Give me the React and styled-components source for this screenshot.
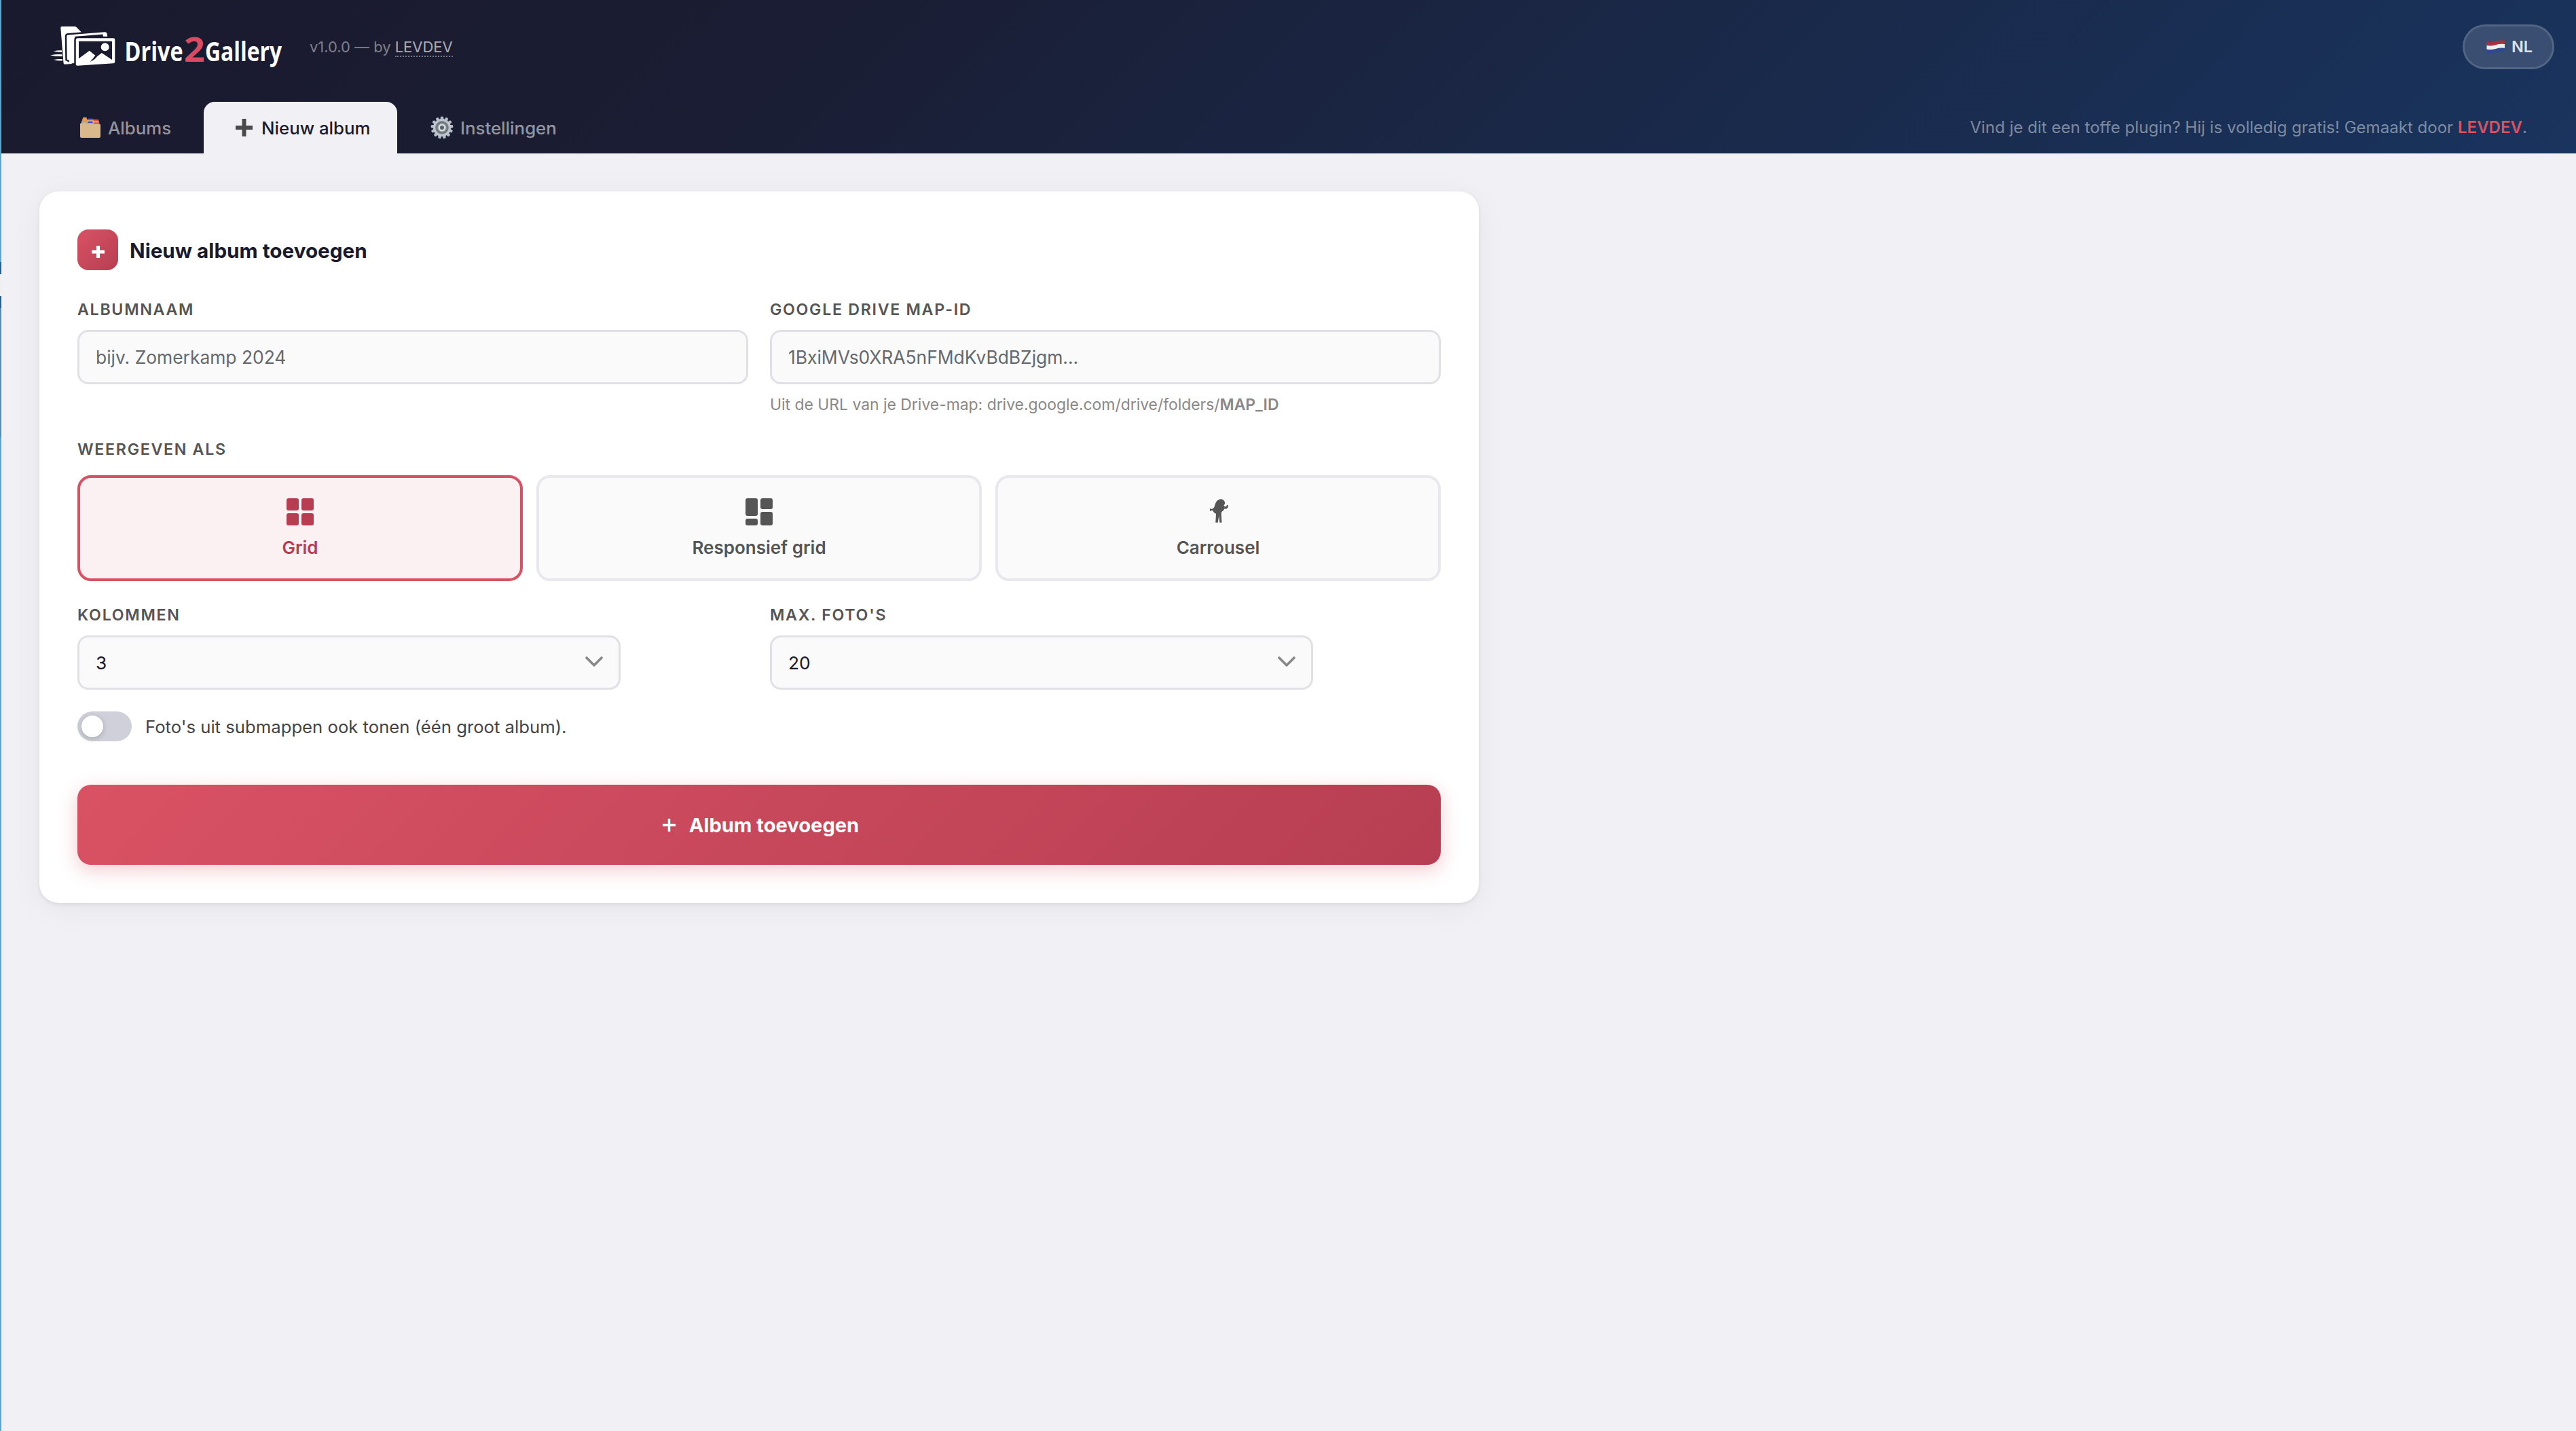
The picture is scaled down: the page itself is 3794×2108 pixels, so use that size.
import React, { useState } from 'react'
import styled, { createGlobalStyle, css } from 'styled-components';

const GlobalStyle = createGlobalStyle`
  * {
    box-sizing: border-box;
  }
  body {
    margin: 0;
    background: #f0f0f5;
    font-family: Inter, "Liberation Sans", sans-serif;
    color: #1a1a2e;
  }
`

const Page = styled.div`
  display: flex;
  min-height: 2108px;
`

// edge of the wp-admin menu, with the arrow of the current item
const MenuEdge = styled.div`
  flex: none;
  display: flex;
  flex-direction: column;
  width: 2px;
  background: #5ba4cc;
`

const MenuGap = styled.div`
  height: 386px;
`

const MenuCurrent = styled.div`
  height: 68px;
  padding: 18px 0;
  background: #25618c;
`

const MenuArrow = styled.div`
  height: 32px;
  background: #f0f0f1;
`

const MenuSub = styled.div`
  height: 190px;
  background: #5590b3;
`

const Content = styled.div`
  flex: 1;
`

const Header = styled.header`
  display: flex;
  flex-direction: column;
  justify-content: space-between;
  height: 226px;
  background: linear-gradient(135deg, #1a1a2e 0%, #1a1d33 30%, #19345e 100%);
`

const TopBar = styled.div`
  display: flex;
  align-items: center;
  height: 138px;
  padding: 0 32px 0 70px;
`

const LogoSvg = styled.svg`
  display: block;
  width: 346px;
  height: 76px;
`

const Version = styled.div`
  margin-left: 38px;
  font-size: 22px;
  line-height: 28px;
  letter-spacing: -0.03px;
  color: rgba(255, 255, 255, 0.45);
`

const VersionLink = styled.a`
  color: rgba(255, 255, 255, 0.65);
  border-bottom: 2px dotted rgba(255, 255, 255, 0.4);
`

const LangButton = styled.button`
  display: flex;
  align-items: center;
  justify-content: center;
  gap: 9px;
  width: 135px;
  height: 66px;
  margin-left: auto;
  padding: 0 0 1px 3px;
  border: 3px solid rgba(255, 255, 255, 0.25);
  border-radius: 40px;
  background: rgba(255, 255, 255, 0.14);
  background-clip: padding-box;
  font-family: inherit;
  font-size: 23.5px;
  font-weight: 600;
  color: rgba(255, 255, 255, 0.85);
`

const NavBar = styled.nav`
  display: flex;
  align-items: stretch;
  height: 76px;
  padding: 0 72px 0 70px;
`

const Tab = styled.a`
  display: flex;
  align-items: center;
  gap: ${props => props.$gap}px;
  width: ${props => props.$width}px;
  padding-left: ${props => props.$pad}px;
  border-radius: 16px 16px 0 0;
  font-size: 25.8px;
  font-weight: 500;
  color: rgba(255, 255, 255, 0.55);
  ${props => props.$active && css`
    background: #f0f0f5;
    color: #1a1a2e;
  `}
`

const Tagline = styled.div`
  margin-left: auto;
  align-self: center;
  padding-bottom: 2px;
  font-size: 24px;
  letter-spacing: 0.03px;
  color: rgba(255, 255, 255, 0.45);
`

const Accent = styled.a`
  font-weight: 600;
  color: #d95264;
`

const Card = styled.section`
  width: 2120px;
  height: 1048px;
  margin: 56px 0 0 56px;
  padding: 56px;
  border-radius: 28px;
  background: #fff;
  box-shadow: 0 2px 6px rgba(0, 0, 0, 0.08), 0 8px 48px rgba(0, 0, 0, 0.05);
`

const CardHead = styled.div`
  display: flex;
  align-items: center;
  gap: 17px;
  height: 60px;
`

const CardIcon = styled.div`
  display: flex;
  align-items: center;
  justify-content: center;
  width: 60px;
  height: 60px;
  padding-top: 5px;
  border-radius: 16px;
  background: linear-gradient(135deg, #d95264, #b73e52);
`

const CardTitle = styled.h2`
  margin: 0;
  padding-top: 2px;
  font-size: 29.7px;
  font-weight: 700;
`

const Row = styled.div`
  display: grid;
  grid-template-columns: 1fr 1fr;
  gap: 32px;
  margin-top: ${props => props.$top}px;
`

const Label = styled.div`
  height: 28px;
  margin-top: ${props => props.$top || 0}px;
  margin-bottom: ${props => props.$bottom || 16}px;
  font-size: 23.2px;
  line-height: 28px;
  font-weight: 600;
  letter-spacing: 1.7px;
  text-transform: uppercase;
  color: #555;
`

const Input = styled.input`
  display: block;
  width: 100%;
  height: 80px;
  padding: 0 24px;
  border: 3px solid #e0e0e6;
  border-radius: 16px;
  background: #fafafa;
  font-family: inherit;
  font-size: 26.4px;
  color: #1a1a2e;
  &::placeholder {
    color: #646970;
    opacity: 1;
  }
`

const Hint = styled.div`
  margin-top: 16px;
  height: 28px;
  font-size: 22.9px;
  line-height: 28px;
  color: #888;
  b {
    font-weight: 600;
  }
`

const Layouts = styled.div`
  display: grid;
  grid-template-columns: repeat(3, 1fr);
  gap: 20px;
`

const LayoutOption = styled.button`
  display: flex;
  flex-direction: column;
  align-items: center;
  height: 156px;
  padding: 30px 0 0;
  border: 4px solid #e8e8ee;
  border-radius: 20px;
  background: #fafafa;
  font-family: inherit;
  font-size: 26px;
  font-weight: 600;
  line-height: 32px;
  color: #555;
  ${props => props.$active && css`
    border-color: #d95264;
    background: #fbf0f2;
    color: #b73e52;
  `}
  svg {
    display: block;
    margin-bottom: 17px;
  }
`

const SelectBox = styled.div`
  display: flex;
  align-items: center;
  justify-content: space-between;
  width: 800px;
  height: 80px;
  padding: 0 22px 0 24px;
  border: 3px solid #e0e0e6;
  border-radius: 16px;
  background: #fafafa;
  font-size: 26.3px;
`

const ToggleRow = styled.div`
  display: flex;
  align-items: center;
  gap: 20px;
  height: 44px;
  margin-top: 32px;
  font-size: 25.7px;
  color: #444;
`

const Toggle = styled.div`
  display: flex;
  align-items: center;
  justify-content: ${props => props.$on ? 'flex-end' : 'flex-start'};
  width: 80px;
  height: 44px;
  padding: 0 6px;
  border-radius: 22px;
  background: ${props => props.$on ? '#d95264' : '#d0d0da'};
`

const Knob = styled.div`
  width: 32px;
  height: 32px;
  border-radius: 50%;
  background: #fff;
  box-shadow: 0 2px 8px rgba(0, 0, 0, 0.2);
`

const Submit = styled.button`
  display: flex;
  align-items: center;
  justify-content: center;
  gap: 20px;
  width: 100%;
  height: 118px;
  margin-top: 64px;
  padding: 0 0 0 5px;
  border: 0;
  border-radius: 20px;
  background: linear-gradient(135deg, #d95264, #b73e52);
  box-shadow: 0 8px 28px rgba(217, 82, 100, 0.3);
  font-family: inherit;
  font-size: 29.1px;
  font-weight: 700;
  color: #fff;
`

const Logo = () => (
  <LogoSvg viewBox="72 31 346 76">
    <g fill="#fff" stroke="#1a1b2f">
      {/* folder */}
      <path d="M89.300 41 q0-2 2-2 h18.700 q1.500 0 2.500 1 l7 7 v46 l-23.500 1.800 q-2.300 .2-2.500-2z" stroke="none" />
      {/* photo in the middle */}
      <path d="M97 53.500 q0-3 3-3.300 l54-4.200 q4-.3 4.800 3.300 l1.200 7 v30 l-50 8 -12.500-6z" strokeWidth="2.500" />
      <path d="M106 57 q0-2.500 3-3 l42.500-3.600 .8 6 v10 h-44z" fill="#1a1b2f" stroke="none" />
      <path d="M102 54 l8-1 v40 l-8 .5z" stroke="none" />
      {/* photo in front */}
      <path d="M110.500 59 q0-4 4-4 h52.500 q3.500 0 3.500 3.500 v32.500 q0 3.300-3.300 3.500 l-52.700 3.400 q-4 .2-4-3.600z" strokeWidth="2.500" />
    </g>
    <path d="M116 60.700 h49 v27.300 l-15.200-10 -7.300 5.500 -10.800-8.800 -15.700 11.500z" fill="#1a1b2f" />
    <circle cx="154.700" cy="69.300" r="6" fill="#fff" />
    <path d="M144 81.500 q-4 7-11.500 9.500 q5-5 8-9.500z" fill="#1a1b2f" />
    <g fill="#fff">
      <path d="M79 75.500 q6-1.800 12-1.200 v2.500 q-6 0-12-1.300z" />
      <path d="M74 81.500 q8-1.800 17.500-1.300 v2.900 q-9.500 .2-17.500-1.600z" />
      <path d="M79 88 q6-1.500 13-1 v2.500 q-7 .2-13-1.500z" />
    </g>
    {/* condensed wordmark */}
    <g fontFamily="'Open Sans', sans-serif" fontWeight="700">
      <text transform="translate(183.500 90) scale(.83 1)" fontSize="39" fill="#fff">Drive</text>
      <text transform="translate(271 90.500) scale(1.060 1)" fontSize="51" fill="#d94a63">2</text>
      <text transform="translate(302 90) scale(.816 1)" fontSize="39" fill="#fff">Gallery</text>
    </g>
  </LogoSvg>
)

const BoxIcon = () => (
  <svg width="32" height="30" viewBox="0 0 32 30">
    <path d="M5 1 q.3-1 1.300-1 h3 q1 0 1.200 1 l.5 2 h17 l1.500 8 H1.500 z" fill="#c9a87c" />
    <path d="M5 1.500 h6 M4 5 h7" stroke="#e8944a" strokeWidth="2.200" />
    <path d="M13 2.500 h6 M12.500 7 h7" stroke="#3a44e0" strokeWidth="2.200" />
    <path d="M21 4 h7 M21.500 8.500 h8" stroke="#e5484a" strokeWidth="2.200" />
    <path d="M1 10 q0-1.500 1.500-1.500 h8 l1.500 1.500 h18 q1 0 1 1 v17 q0 2-2 2 H3 q-2 0-2-2z" fill="#d9b98c" />
  </svg>
)

const HeavyPlus = () => (
  <svg width="25" height="26" viewBox="0 0 25 26">
    <path d="M9.500 0 h6 v10 h9.500 v6 h-9.500 v10 h-6 v-10 H0 v-6 h9.500z" fill="#4a4a4a" />
  </svg>
)

const teeth = [...Array(13).keys()]

const GearIcon = () => (
  <svg width="34" height="34" viewBox="-17 -17 34 34">
    {teeth.map(i => (
      <path key={i} d="M-2 -16 q2 -1 4 0 l.5 4 h-5z" fill="#b4bcc6" transform={`rotate(${i * 360 / 13})`} />
    ))}
    <circle r="11.500" fill="#878d92" stroke="#bfc6cf" strokeWidth="3" />
    <circle r="8" fill="none" stroke="#6c7377" strokeWidth="1.500" />
    <circle r="4.300" fill="#59616a" stroke="#d7dde4" strokeWidth="2.600" />
  </svg>
)

const FlagIcon = () => (
  <svg width="28" height="20" viewBox="0 0 28 20">
    <path d="M.5 2.500 q6.500 1.500 13-.5 t13.500-1.200 v7 h-26.500z" fill="#a5333b" />
    <path d="M.5 7.800 q6.500 1.500 13-.5 t13.500-1.200 v8 h-26.500z" fill="#eceef1" />
    <path d="M.5 13.500 q6.500 1.500 13-.5 t13.500-1.200 v6 q-7-.8-13.500 1 t-13 .500z" fill="#2f4a8c" />
  </svg>
)

const Plus = ({ width, height, stroke }) => (
  <svg width={width} height={height} viewBox={`0 0 ${width} ${height}`}>
    <path
      d={`M${width / 2} 0 V${height} M0 ${height / 2} H${width}`}
      stroke="#fff"
      strokeWidth={stroke}
    />
  </svg>
)

const GridIcon = () => (
  <svg width="40" height="40" viewBox="0 0 40 40" fill="currentColor">
    <rect width="18" height="18" rx="3" />
    <rect x="22" width="18" height="18" rx="3" />
    <rect y="22" width="18" height="18" rx="3" />
    <rect x="22" y="22" width="18" height="18" rx="3" />
  </svg>
)

const MasonryIcon = () => (
  <svg width="40" height="40" viewBox="0 0 40 40" fill="currentColor">
    <rect width="18" height="26" rx="3" />
    <rect y="30" width="18" height="10" rx="3" />
    <rect x="22" width="18" height="16" rx="3" />
    <rect x="22" y="20" width="18" height="20" rx="3" />
  </svg>
)

const CarouselIcon = () => (
  <svg width="40" height="40" viewBox="0 0 40 40" fill="currentColor">
    <path d="M23.500 1.300 Q29 1.300 30 6 Q30.500 8.500 28.500 10.500 L29.300 12 L32 12.300 L33 9.800 L34.800 10.300 Q35.500 13.500 32.500 15.500 L29.500 15.500 Q28 18.500 26 19.300 Q24.600 20.500 24.700 24 L25.500 35.700 H22.300 L21.300 25.500 L19.700 35.700 H16.300 L17 22.700 Q13.300 21.500 12.500 17.900 L10 18 L9.500 19.200 L8 18.300 V15.300 L9.500 15 L10 16 L12.300 15.300 Q15 13.500 15.500 9.500 Q17 2.500 23.500 1.300z" />
  </svg>
)

const ChevronSvg = styled.svg`
  margin-bottom: 2px;
`

const Chevron = () => (
  <ChevronSvg width="28" height="18" viewBox="0 0 28 18">
    <path d="M3 3 L14 14 L25 3" fill="none" stroke="#888" strokeWidth="3.700" strokeLinecap="round" strokeLinejoin="round" />
  </ChevronSvg>
)

const layouts = [
  { id: 'grid', label: 'Grid', Icon: GridIcon },
  { id: 'masonry', label: 'Responsief grid', Icon: MasonryIcon },
  { id: 'carousel', label: 'Carrousel', Icon: CarouselIcon },
]

const App = () => {
  const [layout, setLayout] = useState('grid')
  const [subfolders, setSubfolders] = useState(false)

  return (
    <Page>
      <GlobalStyle />
      <MenuEdge>
        <MenuGap />
        <MenuCurrent><MenuArrow /></MenuCurrent>
        <MenuSub />
      </MenuEdge>
      <Content>
        <Header>
          <TopBar>
            <Logo />
            <Version>v1.0.0 — by <VersionLink>LEVDEV</VersionLink></Version>
            <LangButton><FlagIcon />NL</LangButton>
          </TopBar>
          <NavBar>
            <Tab $width={228} $pad={45} $gap={10}><BoxIcon />Albums</Tab>
            <Tab $width={285} $pad={47} $gap={13} $active><HeavyPlus />Nieuw album</Tab>
            <Tab $width={285} $pad={49} $gap={10}><GearIcon />Instellingen</Tab>
            <Tagline>
              Vind je dit een toffe plugin? Hij is volledig gratis! Gemaakt door <Accent>LEVDEV</Accent>.
            </Tagline>
          </NavBar>
        </Header>
        <Card>
          <CardHead>
            <CardIcon><Plus width={19} height={18} stroke={5} /></CardIcon>
            <CardTitle>Nieuw album toevoegen</CardTitle>
          </CardHead>
          <Row $top={44}>
            <div>
              <Label>Albumnaam</Label>
              <Input placeholder="bijv. Zomerkamp 2024" />
            </div>
            <div>
              <Label>Google Drive map-ID</Label>
              <Input placeholder="1BxiMVs0XRA5nFMdKvBdBZjgm..." />
              <Hint>Uit de URL van je Drive-map: drive.google.com/drive/folders/<b>MAP_ID</b></Hint>
            </div>
          </Row>
          <Label $top={38} $bottom={24}>Weergeven als</Label>
          <Layouts>
            {layouts.map(({ id, label, Icon }) => (
              <LayoutOption key={id} $active={layout === id} onClick={() => setLayout(id)}>
                <Icon />
                {label}
              </LayoutOption>
            ))}
          </Layouts>
          <Row $top={36}>
            <div>
              <Label>Kolommen</Label>
              <SelectBox>3<Chevron /></SelectBox>
            </div>
            <div>
              <Label>Max. foto's</Label>
              <SelectBox>20<Chevron /></SelectBox>
            </div>
          </Row>
          <ToggleRow>
            <Toggle $on={subfolders} onClick={() => setSubfolders(!subfolders)}><Knob /></Toggle>
            Foto's uit submappen ook tonen (één groot album).
          </ToggleRow>
          <Submit><Plus width={19} height={19} stroke={3.5} />Album toevoegen</Submit>
        </Card>
      </Content>
    </Page>
  )
}

export default App;
